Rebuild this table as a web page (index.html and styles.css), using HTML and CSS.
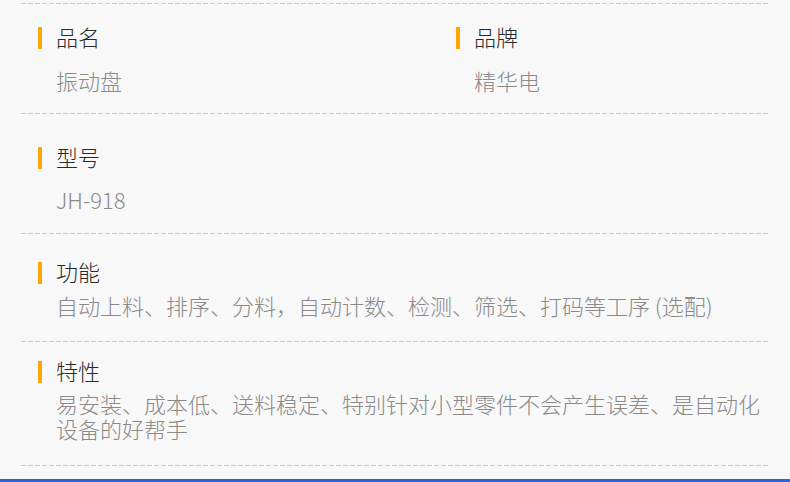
FILE: index.html
```html
<!DOCTYPE html>
<html lang="zh-CN">
<head>
  <meta charset="UTF-8">
  <meta name="viewport" content="width=device-width, initial-scale=1.0">
  <title>产品参数</title>
  <link rel="stylesheet" href="styles.css">
</head>
<body>

<div class="sheet">
  <div class="rule rule-top"></div>

  <div class="spec spec-pair">
    <div class="item">
      <div class="label">品名</div>
      <div class="value">振动盘</div>
    </div>
    <div class="item">
      <div class="label">品牌</div>
      <div class="value">精华电</div>
    </div>
  </div>
  <div class="rule"></div>

  <div class="spec spec-model">
    <div class="item">
      <div class="label">型号</div>
      <div class="value">JH-918</div>
    </div>
  </div>
  <div class="rule"></div>

  <div class="spec spec-func">
    <div class="item">
      <div class="label">功能</div>
      <div class="value">自动上料、排序、分料，自动计数、检测、筛选、打码等工序 (选配)</div>
    </div>
  </div>
  <div class="rule"></div>

  <div class="spec spec-feature">
    <div class="item">
      <div class="label">特性</div>
      <div class="value">易安装、成本低、送料稳定、特别针对小型零件不会产生误差、是自动化设备的好帮手</div>
    </div>
  </div>
  <div class="rule"></div>
</div>

<div class="footer-bar"></div>

</body>
</html>
```

FILE: styles.css
```css
/* General */
body {
  margin: 0;
  background: #f8f8f8;
  font-family: "Noto Sans CJK SC", "Noto Sans", sans-serif;
  overflow: hidden;
}

.sheet {
  margin-left: 21px;
  width: 749px;
}

/* Dashed separators */
.rule {
  height: 1px;
  background: repeating-linear-gradient(90deg, #c9c9c9 0, #c9c9c9 5px, transparent 5px, transparent 7px);
}

.rule-top {
  margin-top: 3px;
}

/* Spec blocks */
.spec {
  padding-left: 17px;
}

.spec-pair {
  display: grid;
  grid-template-columns: 418px 1fr;
  padding-top: 23px;
  padding-bottom: 22px;
}

.spec-model {
  padding-top: 33px;
  padding-bottom: 23px;
}

.spec-func {
  padding-top: 28px;
  padding-bottom: 25px;
}

.spec-feature {
  padding-top: 19px;
  padding-bottom: 24px;
}

/* Label with orange marker */
.label {
  display: flex;
  align-items: flex-start;
  height: 22px;
  font-size: 22px;
  font-weight: 300;
  line-height: 18px;
  color: #2a2a2a;
}

.label::before {
  content: "";
  flex: none;
  width: 4px;
  height: 22px;
  background: #ffa500;
  margin-right: 14px;
}

.value {
  padding-left: 18px;
  font-size: 22px;
  font-weight: 300;
  line-height: 22px;
  color: #8a8a8a;
}

.spec-pair .value {
  margin-top: 20px;
}

.spec-model .value {
  margin-top: 19px;
}

.spec-func .value {
  margin-top: 10px;
}

.spec-feature .value {
  margin-top: 8px;
  line-height: 25px;
}

/* Bottom strip */
.footer-bar {
  margin-top: 13px;
  height: 6px;
  background: #2b63d8;
}
```
